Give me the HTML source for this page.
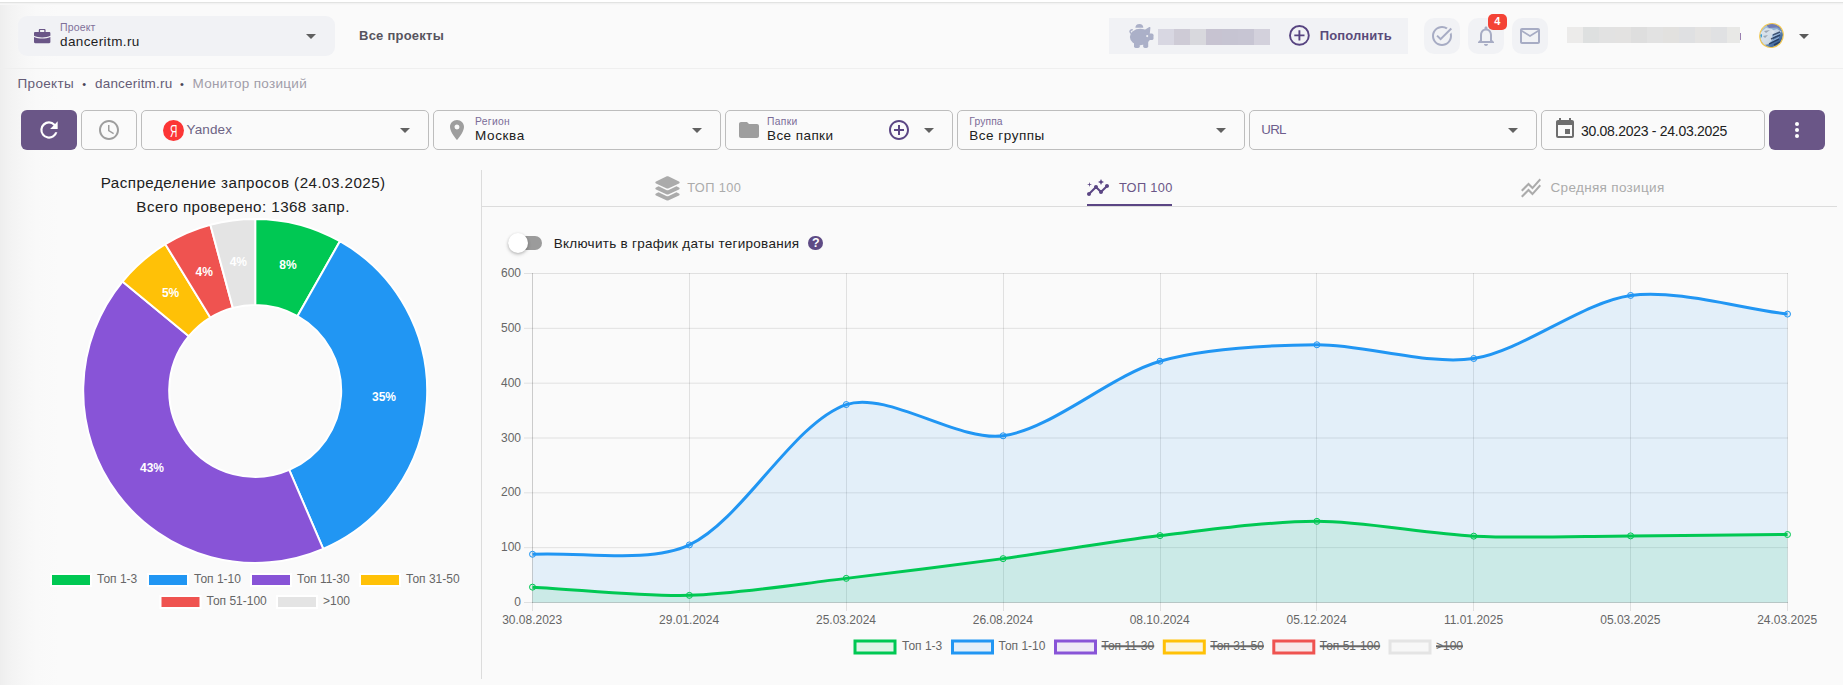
<!DOCTYPE html>
<html lang="ru">
<head>
<meta charset="utf-8">
<title>Монитор позиций</title>
<style>
*{box-sizing:border-box;margin:0;padding:0}
html,body{width:1843px;height:685px;overflow:hidden;background:#fafafa;font-family:"Liberation Sans",sans-serif;color:#212121}
body{position:relative}
.abs{position:absolute}
.topwhite{position:absolute;left:0;top:0;width:1843px;height:2px;background:#fff}
.topline{position:absolute;left:0;top:2px;width:1843px;height:3px;background:linear-gradient(180deg,#e2e3e2 0,#e2e3e2 1px,#f2f2f2 1px,#f2f2f2 2px,#f7f7f7 2px,#f7f7f7 3px)}
.leftshade{position:absolute;left:0;top:3px;width:60px;height:682px;background:linear-gradient(90deg,#eeeeee 0,#f2f2f2 8px,#f5f5f5 17px,#f7f7f7 26px,#f9f9f9 36px,#fafafa 60px)}
.hdrline{position:absolute;left:0;top:68px;width:1843px;height:1px;background:#efefef}
.proj{position:absolute;left:18px;top:16px;width:317px;height:40px;background:#f1f2f5;border-radius:9px}
.t{position:absolute;white-space:nowrap;line-height:1}
.btn{position:absolute;top:110px;height:40px;border-radius:6px}
.sel{position:absolute;top:110px;height:40px;border:1px solid #bdbdbd;border-radius:5px;background:#fafafa}
.ibtn{position:absolute;top:18px;width:36px;height:36px;border-radius:10px;background:#f1f2f5}
svg{position:absolute;overflow:visible}
svg text{font-family:"Liberation Sans",sans-serif}
.c{text-align:center}

</style>
</head>
<body>
<div class="leftshade"></div><div class="topwhite"></div><div class="topline"></div>
<!-- header -->
<div class="proj"></div>
<svg style="left:34px;top:28.800px" width="16.400" height="14.200" viewBox="0 0 16.400 14.200"><path fill="#6a5687" d="M6 0h4.400c.7 0 1.200.5 1.200 1.200V3h3.600c.7 0 1.200.5 1.200 1.200v2.600c-2.400 1.100-5.200 1.700-8.200 1.700S2.400 7.900 0 6.800V4.200C0 3.500.5 3 1.200 3h3.600V1.200C4.800.5 5.300 0 6 0zm.1 1.100V3h4.200V1.100zM0 8.100c2.500 1 5.300 1.500 8.200 1.500s5.700-.5 8.200-1.500V13c0 .7-.5 1.200-1.200 1.200h-14C.5 14.200 0 13.700 0 13z"/></svg>
<span class="t" style="left:60px;top:22.01px;font-size:10.5px;color:#7f7099;font-weight:400;letter-spacing:0.143px;">Проект</span>
<span class="t" style="left:60px;top:34.57px;font-size:13.5px;color:#1d1d1f;font-weight:400;letter-spacing:0.388px;">danceritm.ru</span>
<svg style="left:306px;top:34px" width="10" height="5" viewBox="0 0 10 5"><path fill="#606060" d="M0 0h10L5 5z"/></svg>
<span class="t" style="left:359px;top:29.40px;font-size:13px;color:#57545e;font-weight:700;letter-spacing:0.240px;">Все проекты</span>
<div class="abs" style="left:1109px;top:18px;width:299px;height:36px;background:#f1f2f5"></div>
<svg style="left:1128.800px;top:23.900px" width="24.500" height="24" viewBox="0 0 24.500 24"><g fill="#abb0c8"><path d="M6.400 3.800A3.950 3.800 0 0 1 14.300 3.800z"/><ellipse cx="11.200" cy="13" rx="10.300" ry="8.300"/><path d="M14.600 6.500L20.300 3c.7-.3 1.200 0 1.100.8L20.800 10z"/><rect x="17" y="9.600" width="7.500" height="6.400" rx="1.600"/><rect x="5" y="16" width="5.800" height="8" rx="1.700"/><rect x="14.200" y="16" width="5" height="8" rx="1.700"/></g><path d="M3.300 9.400C.6 9.600 0 6 3.200 5.800" fill="none" stroke="#abb0c8" stroke-width="1.500" stroke-linecap="round"/><circle cx="18.200" cy="12.100" r="1.050" fill="#f0f1f4"/></svg>
<div class="abs" style="left:1158px;top:29px;width:16px;height:16px;background:#d8d7e2"></div>
<div class="abs" style="left:1174px;top:29px;width:16px;height:16px;background:#cecbd6"></div>
<div class="abs" style="left:1190px;top:29px;width:16px;height:16px;background:#d8d8dd"></div>
<div class="abs" style="left:1206px;top:29px;width:16px;height:16px;background:#c7c3d1"></div>
<div class="abs" style="left:1222px;top:29px;width:16px;height:16px;background:#c6c4d2"></div>
<div class="abs" style="left:1238px;top:29px;width:16px;height:16px;background:#c7c5d3"></div>
<div class="abs" style="left:1254px;top:29px;width:16px;height:16px;background:#d3d1dc"></div>
<svg style="left:1289px;top:25.300px" width="21" height="21" viewBox="0 0 21 21"><circle cx="10.400" cy="10.400" r="9.400" fill="none" stroke="#574480" stroke-width="1.900"/><path d="M10.400 5.300v10.200M5.300 10.400h10.200" stroke="#574480" stroke-width="1.900" fill="none"/></svg>
<span class="t" style="left:1319.8px;top:29.20px;font-size:13px;color:#5a4b7a;font-weight:700;letter-spacing:0.098px;">Пополнить</span>
<div class="ibtn" style="left:1424px"></div>
<div class="ibtn" style="left:1468px"></div>
<div class="ibtn" style="left:1512px"></div>
<svg style="left:1430px;top:24px" width="24" height="24" viewBox="0 0 24 24"><path fill="#a7acc4" d="M22 5.180L10.590 16.600l-4.240-4.240 1.410-1.410 2.830 2.830 10-10L22 5.180zm-2.210 5.040c.130.570.210 1.170.210 1.780 0 4.420-3.580 8-8 8s-8-3.580-8-8 3.580-8 8-8c1.580 0 3.040.460 4.280 1.250l1.440-1.440A9.900 9.900 0 0 0 12 2C6.480 2 2 6.480 2 12s4.480 10 10 10 10-4.480 10-10c0-1.190-.220-2.330-.600-3.390l-1.610 1.610z"/></svg>
<svg style="left:1474px;top:24px" width="24" height="24" viewBox="0 0 24 24"><path fill="#a7acc4" d="M12 22c1.100 0 2-.9 2-2h-4c0 1.100.9 2 2 2zm6-6v-5c0-3.070-1.630-5.640-4.500-6.320V4c0-.830-.670-1.500-1.500-1.500s-1.500.670-1.500 1.500v.680C7.640 5.360 6 7.920 6 11v5l-2 2v1h16v-1l-2-2zm-2 1H8v-6c0-2.480 1.510-4.500 4-4.500s4 2.020 4 4.500v6z"/></svg>
<svg style="left:1518px;top:24px" width="24" height="24" viewBox="0 0 24 24"><path fill="#a7acc4" d="M20 4H4c-1.100 0-1.990.9-1.990 2L2 18c0 1.100.9 2 2 2h16c1.100 0 2-.9 2-2V6c0-1.100-.9-2-2-2zm0 14H4V8l8 5 8-5v10zm-8-7L4 6h16l-8 5z"/></svg>
<div class="abs" style="left:1488px;top:14px;width:19px;height:16px;background:#f44336;border-radius:5px"></div>
<span class="t" style="left:1494.3px;top:15.89px;font-size:11px;color:#fff;font-weight:700;">4</span>
<div class="abs" style="left:1567px;top:27px;width:16px;height:16px;background:#ecebea"></div>
<div class="abs" style="left:1583px;top:27px;width:16px;height:16px;background:#dee0e0"></div>
<div class="abs" style="left:1599px;top:27px;width:16px;height:16px;background:#e2e2e2"></div>
<div class="abs" style="left:1615px;top:27px;width:16px;height:16px;background:#e3e2e1"></div>
<div class="abs" style="left:1631px;top:27px;width:16px;height:16px;background:#dedede"></div>
<div class="abs" style="left:1647px;top:27px;width:16px;height:16px;background:#e2e2e2"></div>
<div class="abs" style="left:1663px;top:27px;width:16px;height:16px;background:#e2e1df"></div>
<div class="abs" style="left:1679px;top:27px;width:16px;height:16px;background:#dfe0e2"></div>
<div class="abs" style="left:1695px;top:27px;width:16px;height:16px;background:#e4e3e2"></div>
<div class="abs" style="left:1711px;top:27px;width:16px;height:16px;background:#e0e1e3"></div>
<div class="abs" style="left:1727px;top:27px;width:13px;height:16px;background:#e8e8e6"></div>
<div class="abs" style="left:1740px;top:33px;width:1px;height:7px;background:#9a7fb0"></div>
<svg style="left:1758.500px;top:23.300px" width="25" height="25" viewBox="0 0 25 25"><defs><clipPath id="avc"><ellipse cx="12.500" cy="12.500" rx="11.300" ry="12" transform="rotate(35 12.500 12.500)"/></clipPath><linearGradient id="avg" x1="0" y1="0" x2="1" y2="1"><stop offset="0" stop-color="#b9cfe3"/><stop offset=".45" stop-color="#8fb0d2"/><stop offset=".7" stop-color="#4a72a6"/><stop offset="1" stop-color="#274778"/></linearGradient></defs><g clip-path="url(#avc)"><rect width="25" height="25" fill="url(#avg)"/><path d="M6 1h16l2 6-6-2.500L10 5z" fill="#6d76b0" opacity=".9"/><path d="M2 9l5-4 6 1 3 3-3 3 1 4-4 5-5 1-3-5z" fill="#e6ebef" opacity=".8"/><path d="M12 8l6-2 5 3-4 1-4 3z" fill="#dfe8f0" opacity=".75"/><path d="M5 8l6-1-4 3zM4 13l5-1-3 3z" fill="#8d99a6" opacity=".8"/><path d="M14 12l7-3M12 16l9-4M10 21l10-5M15 22l6-3" stroke="#1f3558" stroke-width="1.400" fill="none" opacity=".8"/><path d="M13 14l8-3.500M11 19l9-4.500" stroke="#a9c6e4" stroke-width="1" fill="none" opacity=".8"/><path d="M1 12l2-1v4z" fill="#35a0d8"/></g><ellipse cx="12.500" cy="12.500" rx="11.600" ry="12.200" transform="rotate(35 12.500 12.500)" fill="none" stroke="#f0c64e" stroke-width="1.100"/></svg>
<svg style="left:1799px;top:34px" width="10" height="5" viewBox="0 0 10 5"><path fill="#5a5a5a" d="M0 0h10L5 5z"/></svg>
<div class="hdrline"></div>
<!-- breadcrumbs -->
<span class="t" style="left:17.5px;top:76.57px;font-size:13.5px;color:#655c76;font-weight:400;letter-spacing:0.338px;">Проекты</span>
<span class="t" style="left:82.2px;top:79.09px;font-size:11px;color:#4a4458;font-weight:400;">•</span>
<span class="t" style="left:95px;top:76.57px;font-size:13.5px;color:#655c76;font-weight:400;letter-spacing:0.197px;">danceritm.ru</span>
<span class="t" style="left:180.1px;top:79.09px;font-size:11px;color:#4a4458;font-weight:400;">•</span>
<span class="t" style="left:192.5px;top:76.57px;font-size:13.5px;color:#a19da9;font-weight:400;letter-spacing:0.306px;">Монитор позиций</span>
<!-- toolbar -->
<div class="btn" style="left:21px;width:56px;background:#6a5687"></div>
<svg style="left:35.800px;top:117px" width="26" height="26" viewBox="0 0 24 24"><path fill="#fff" d="M17.650 6.350A7.958 7.958 0 0 0 12 4a8 8 0 1 0 7.730 10h-2.080A6 6 0 1 1 12 6c1.660 0 3.140.690 4.220 1.780L13 11h7V4z"/></svg>
<div class="sel" style="left:81px;width:56px"></div>
<svg style="left:97px;top:118px" width="24" height="24" viewBox="0 0 24 24"><path fill="#9e9e9e" d="M11.990 2C6.470 2 2 6.480 2 12s4.470 10 9.990 10C17.520 22 22 17.520 22 12S17.520 2 11.990 2zM12 20c-4.420 0-8-3.580-8-8s3.580-8 8-8 8 3.580 8 8-3.580 8-8 8zm.5-13H11v6l5.250 3.150.750-1.230-4.500-2.670z"/></svg>
<div class="sel" style="left:141px;width:288px"></div>
<div class="abs" style="left:163px;top:119.500px;width:21px;height:21px;border-radius:50%;background:#fc3535"></div>
<span class="t" style="left:169.9px;top:123.33px;font-size:16.5px;color:#fff;font-weight:400;transform:scaleX(.62);transform-origin:0 0">Я</span>
<span class="t" style="left:186.5px;top:123.07px;font-size:13.5px;color:#6d6384;font-weight:400;letter-spacing:0.143px;">Yandex</span>
<svg style="left:400px;top:128px" width="10" height="5" viewBox="0 0 10 5"><path fill="#616161" d="M0 0h10L5 5z"/></svg>
<div class="sel" style="left:433px;width:288px"></div>
<svg style="left:444.600px;top:118px" width="24" height="24" viewBox="0 0 24 24"><path fill="#9e9e9e" d="M12 2C8.130 2 5 5.130 5 9c0 5.250 7 13 7 13s7-7.750 7-13c0-3.870-3.130-7-7-7zm0 9.500a2.500 2.500 0 0 1 0-5 2.500 2.500 0 0 1 0 5z"/></svg>
<span class="t" style="left:475px;top:116.98px;font-size:10.3px;color:#7b6c98;font-weight:400;letter-spacing:0.345px;">Регион</span>
<span class="t" style="left:475px;top:128.87px;font-size:13.5px;color:#212121;font-weight:400;letter-spacing:0.622px;">Москва</span>
<svg style="left:692px;top:128px" width="10" height="5" viewBox="0 0 10 5"><path fill="#616161" d="M0 0h10L5 5z"/></svg>
<div class="sel" style="left:725px;width:228px"></div>
<svg style="left:736.600px;top:118px" width="24" height="24" viewBox="0 0 24 24"><path fill="#9e9e9e" d="M10 4H4c-1.100 0-1.990.9-1.990 2L2 18c0 1.100.9 2 2 2h16c1.100 0 2-.9 2-2V8c0-1.100-.9-2-2-2h-8l-2-2z"/></svg>
<span class="t" style="left:767px;top:116.98px;font-size:10.3px;color:#7b6c98;font-weight:400;letter-spacing:0.333px;">Папки</span>
<span class="t" style="left:767px;top:128.87px;font-size:13.5px;color:#212121;font-weight:400;letter-spacing:0.426px;">Все папки</span>
<svg style="left:887px;top:118px" width="24" height="24" viewBox="0 0 24 24"><path fill="#5b4684" d="M13 7h-2v4H7v2h4v4h2v-4h4v-2h-4V7zm-1-5C6.480 2 2 6.480 2 12s4.480 10 10 10 10-4.480 10-10S17.520 2 12 2zm0 18c-4.410 0-8-3.590-8-8s3.590-8 8-8 8 3.590 8 8-3.590 8-8 8z"/></svg>
<svg style="left:923.5px;top:128px" width="10" height="5" viewBox="0 0 10 5"><path fill="#616161" d="M0 0h10L5 5z"/></svg>
<div class="sel" style="left:957px;width:288px"></div>
<span class="t" style="left:969.3px;top:116.98px;font-size:10.3px;color:#7b6c98;font-weight:400;letter-spacing:0.131px;">Группа</span>
<span class="t" style="left:969.3px;top:128.87px;font-size:13.5px;color:#212121;font-weight:400;letter-spacing:0.515px;">Все группы</span>
<svg style="left:1216px;top:128px" width="10" height="5" viewBox="0 0 10 5"><path fill="#616161" d="M0 0h10L5 5z"/></svg>
<div class="sel" style="left:1249px;width:288px"></div>
<span class="t" style="left:1261.2px;top:123.24px;font-size:13.3px;color:#6d5d8c;font-weight:400;letter-spacing:-0.653px;">URL</span>
<svg style="left:1508px;top:128px" width="10" height="5" viewBox="0 0 10 5"><path fill="#616161" d="M0 0h10L5 5z"/></svg>
<div class="sel" style="left:1541px;width:224px"></div>
<svg style="left:1552.800px;top:117.100px" width="24" height="24" viewBox="0 0 24 24"><path fill="#6e6e6e" d="M17 12h-5v5h5v-5zM16 1v2H8V1H6v2H5c-1.110 0-1.990.9-1.990 2L3 19a2 2 0 0 0 2 2h14c1.100 0 2-.9 2-2V5c0-1.100-.9-2-2-2h-1V1h-2zm3 18H5V8h14v11z"/></svg>
<span class="t" style="left:1581px;top:124.15px;font-size:14px;color:#212121;font-weight:400;letter-spacing:-0.285px;">30.08.2023 - 24.03.2025</span>
<div class="btn" style="left:1769px;width:56px;background:#6a5687"></div>
<svg style="left:1785px;top:118.400px" width="24" height="24" viewBox="0 0 24 24"><circle cx="12" cy="6" r="2" fill="#fff"/><circle cx="12" cy="12" r="2" fill="#fff"/><circle cx="12" cy="18" r="2" fill="#fff"/></svg>
<!-- left panel: donut -->
<span class="t c" style="left:43.19999999999999px;width:400px;top:175.13px;font-size:15.2px;color:#212121;font-weight:400;letter-spacing:0.445px;">Распределение запросов (24.03.2025)</span>
<span class="t c" style="left:43.099999999999994px;width:400px;top:199.43px;font-size:15.2px;color:#212121;font-weight:400;letter-spacing:0.425px;">Всего проверено: 1368 запр.</span>
<svg style="left:0;top:0" width="481" height="685" viewBox="0 0 481 685"><path d="M255.20 218.90A172 172 0 0 1 339.90 241.20L297.55 316.05A86 86 0 0 0 255.20 304.90Z" fill="#00c853" stroke="#fff" stroke-width="2" stroke-linejoin="bevel"/><path d="M339.90 241.20A172 172 0 0 1 323.23 548.87L289.22 469.89A86 86 0 0 0 297.55 316.05Z" fill="#2196f3" stroke="#fff" stroke-width="2" stroke-linejoin="bevel"/><path d="M323.23 548.87A172 172 0 0 1 122.48 281.49L188.84 336.20A86 86 0 0 0 289.22 469.89Z" fill="#8854d7" stroke="#fff" stroke-width="2" stroke-linejoin="bevel"/><path d="M122.48 281.49A172 172 0 0 1 165.33 244.25L210.27 317.57A86 86 0 0 0 188.84 336.20Z" fill="#ffc107" stroke="#fff" stroke-width="2" stroke-linejoin="bevel"/><path d="M165.33 244.25A172 172 0 0 1 210.39 224.84L232.80 307.87A86 86 0 0 0 210.27 317.57Z" fill="#ef5350" stroke="#fff" stroke-width="2" stroke-linejoin="bevel"/><path d="M210.39 224.84A172 172 0 0 1 255.20 218.90L255.20 304.90A86 86 0 0 0 232.80 307.87Z" fill="#e4e4e4" stroke="#fff" stroke-width="2" stroke-linejoin="bevel"/><text x="288.0" y="269.4" font-size="12" font-weight="700" fill="#fff" text-anchor="middle">8%</text><text x="384.0" y="401.1" font-size="12" font-weight="700" fill="#fff" text-anchor="middle">35%</text><text x="152.0" y="471.6" font-size="12" font-weight="700" fill="#fff" text-anchor="middle">43%</text><text x="170.6" y="296.7" font-size="12" font-weight="700" fill="#fff" text-anchor="middle">5%</text><text x="204.2" y="275.6" font-size="12" font-weight="700" fill="#fff" text-anchor="middle">4%</text><text x="238.3" y="266.2" font-size="12" font-weight="700" fill="#fff" text-anchor="middle">4%</text><rect x="51" y="574" width="40" height="12" fill="#00c853" stroke="#fff" stroke-width="2"/><text x="97" y="583.4" font-size="12" fill="#666">Топ 1-3</text><rect x="148" y="574" width="40" height="12" fill="#2196f3" stroke="#fff" stroke-width="2"/><text x="194" y="583.4" font-size="12" fill="#666">Топ 1-10</text><rect x="251" y="574" width="40" height="12" fill="#8854d7" stroke="#fff" stroke-width="2"/><text x="297" y="583.4" font-size="12" fill="#666">Топ 11-30</text><rect x="360" y="574" width="40" height="12" fill="#ffc107" stroke="#fff" stroke-width="2"/><text x="406" y="583.4" font-size="12" fill="#666">Топ 31-50</text><rect x="160.5" y="596" width="40" height="12" fill="#ef5350" stroke="#fff" stroke-width="2"/><text x="206.5" y="605.4" font-size="12" fill="#666">Топ 51-100</text><rect x="277" y="596" width="40" height="12" fill="#e4e4e4" stroke="#fff" stroke-width="2"/><text x="323" y="605.4" font-size="12" fill="#666">&gt;100</text></svg>
<div class="abs" style="left:481px;top:170px;width:1px;height:509px;background:#dcdcdc"></div>
<!-- right panel: line chart -->
<div class="abs" style="left:482px;top:206px;width:1355px;height:1px;background:#dcdcdc"></div>
<svg style="left:654.500px;top:175.500px" width="25" height="25" viewBox="0 0 25 25"><path fill="#ababab" d="M12.500 .3c.4 0 .8.100 1.200.3l10.300 4.900c.9.400.9 1.500 0 1.900l-10.300 4.900c-.8.400-1.600.4-2.400 0L1 7.400c-.9-.4-.9-1.500 0-1.900L11.300.6c.4-.2.800-.3 1.200-.3zM3.500 10.300l7.800 3.700c.8.400 1.600.4 2.400 0l7.800-3.700 2.500 1.200c.9.400.9 1.500 0 1.900l-10.300 4.900c-.8.400-1.600.4-2.400 0L1 13.400c-.9-.4-.9-1.500 0-1.900zM3.500 16.300l7.800 3.700c.8.400 1.600.4 2.400 0l7.800-3.700 2.500 1.200c.9.400.9 1.500 0 1.900l-10.300 4.900c-.8.400-1.600.4-2.400 0L1 19.400c-.9-.4-.9-1.500 0-1.900z"/></svg>
<span class="t" style="left:687.2px;top:181.86px;font-size:12.8px;color:#ababab;font-weight:400;letter-spacing:0.381px;">ТОП 100</span>
<svg style="left:1086px;top:176px" width="24" height="24" viewBox="0 0 24 24"><path fill="#5b4684" d="M21 8c-1.450 0-2.260 1.440-1.930 2.510l-3.550 3.560c-.3-.090-.740-.090-1.040 0l-2.550-2.550C12.270 10.450 11.460 9 10 9c-1.450 0-2.270 1.440-1.930 2.520l-4.560 4.550C2.440 15.740 1 16.550 1 18c0 1.100.9 2 2 2 1.450 0 2.260-1.440 1.930-2.510l4.550-4.560c.3.090.740.090 1.040 0l2.550 2.550C12.730 16.550 13.540 18 15 18c1.450 0 2.270-1.440 1.930-2.520l3.560-3.550c1.070.330 2.510-.480 2.510-1.930 0-1.100-.9-2-2-2zM15 9l.940-2.070L18 6l-2.060-.930L15 3l-.920 2.070L12 6l2.080.930zM3.500 11L4 9l2-.5L4 8l-.5-2L3 8l-2 .5L3 9z"/></svg>
<span class="t" style="left:1119px;top:181.86px;font-size:12.8px;color:#6a5687;font-weight:400;letter-spacing:0.348px;">ТОП 100</span>
<div class="abs" style="left:1087px;top:204px;width:85px;height:2px;background:#5b4684"></div>
<svg style="left:1518.500px;top:176px" width="24" height="24" viewBox="0 0 24 24"><path fill="#ababab" d="M2 19.990l7.500-7.510 4 4 7.090-7.970L22 9.920l-8.500 9.560-4-4-6 6.010-1.500-1.500zm1.500-4.500l6-6.010 4 4L22 3.920l-1.410-1.410-7.090 7.970-4-4L2 13.990l1.500 1.500z"/></svg>
<span class="t" style="left:1550.5px;top:181.17px;font-size:13.5px;color:#ababab;font-weight:400;letter-spacing:0.325px;">Средняя позиция</span>
<div class="abs" style="left:508px;top:236px;width:34px;height:14px;border-radius:7px;background:#9b9b9b"></div>
<div class="abs" style="left:508px;top:233px;width:20px;height:20px;border-radius:50%;background:#fff;box-shadow:0 1px 3px 0 rgba(0,0,0,.22),0 2px 4px 0 rgba(0,0,0,.1)"></div>
<span class="t" style="left:553.7px;top:236.57px;font-size:13.5px;color:#212121;font-weight:400;letter-spacing:0.283px;">Включить в график даты тегирования</span>
<div class="abs" style="left:808.300px;top:235.600px;width:14.500px;height:14.500px;border-radius:50%;background:#5e4b85"></div>
<span class="t" style="left:812.1px;top:236.72px;font-size:12.5px;color:#fff;font-weight:700;">?</span>
<svg style="left:482px;top:260px" width="1361" height="425" viewBox="482 260 1361 425"><path d="M524 602.50H532" stroke="rgba(0,0,0,.1)" stroke-width="1" fill="none"/><path d="M532 602.50H1788" stroke="rgba(0,0,0,.19)" stroke-width="1" fill="none"/><text x="521" y="606.1" font-size="12" fill="#666" text-anchor="end">0</text><path d="M524 547.67H532" stroke="rgba(0,0,0,.1)" stroke-width="1" fill="none"/><path d="M532 547.67H1788" stroke="rgba(0,0,0,.1)" stroke-width="1" fill="none"/><text x="521" y="551.3" font-size="12" fill="#666" text-anchor="end">100</text><path d="M524 492.83H532" stroke="rgba(0,0,0,.1)" stroke-width="1" fill="none"/><path d="M532 492.83H1788" stroke="rgba(0,0,0,.1)" stroke-width="1" fill="none"/><text x="521" y="496.4" font-size="12" fill="#666" text-anchor="end">200</text><path d="M524 438.00H532" stroke="rgba(0,0,0,.1)" stroke-width="1" fill="none"/><path d="M532 438.00H1788" stroke="rgba(0,0,0,.1)" stroke-width="1" fill="none"/><text x="521" y="441.6" font-size="12" fill="#666" text-anchor="end">300</text><path d="M524 383.17H532" stroke="rgba(0,0,0,.1)" stroke-width="1" fill="none"/><path d="M532 383.17H1788" stroke="rgba(0,0,0,.1)" stroke-width="1" fill="none"/><text x="521" y="386.8" font-size="12" fill="#666" text-anchor="end">400</text><path d="M524 328.34H532" stroke="rgba(0,0,0,.1)" stroke-width="1" fill="none"/><path d="M532 328.34H1788" stroke="rgba(0,0,0,.1)" stroke-width="1" fill="none"/><text x="521" y="331.9" font-size="12" fill="#666" text-anchor="end">500</text><path d="M524 273.50H532" stroke="rgba(0,0,0,.1)" stroke-width="1" fill="none"/><path d="M532 273.50H1788" stroke="rgba(0,0,0,.1)" stroke-width="1" fill="none"/><text x="521" y="277.1" font-size="12" fill="#666" text-anchor="end">600</text><path d="M532.5 603V611" stroke="rgba(0,0,0,.1)" stroke-width="1" fill="none"/><path d="M532.5 273V603" stroke="rgba(0,0,0,.19)" stroke-width="1" fill="none"/><text x="532.2" y="623.700" font-size="12" fill="#666" text-anchor="middle">30.08.2023</text><path d="M689.5 603V611" stroke="rgba(0,0,0,.1)" stroke-width="1" fill="none"/><path d="M689.5 273V603" stroke="rgba(0,0,0,.1)" stroke-width="1" fill="none"/><text x="689.1" y="623.700" font-size="12" fill="#666" text-anchor="middle">29.01.2024</text><path d="M846.5 603V611" stroke="rgba(0,0,0,.1)" stroke-width="1" fill="none"/><path d="M846.5 273V603" stroke="rgba(0,0,0,.1)" stroke-width="1" fill="none"/><text x="846.0" y="623.700" font-size="12" fill="#666" text-anchor="middle">25.03.2024</text><path d="M1003.5 603V611" stroke="rgba(0,0,0,.1)" stroke-width="1" fill="none"/><path d="M1003.5 273V603" stroke="rgba(0,0,0,.1)" stroke-width="1" fill="none"/><text x="1002.8" y="623.700" font-size="12" fill="#666" text-anchor="middle">26.08.2024</text><path d="M1160.5 603V611" stroke="rgba(0,0,0,.1)" stroke-width="1" fill="none"/><path d="M1160.5 273V603" stroke="rgba(0,0,0,.1)" stroke-width="1" fill="none"/><text x="1159.7" y="623.700" font-size="12" fill="#666" text-anchor="middle">08.10.2024</text><path d="M1316.5 603V611" stroke="rgba(0,0,0,.1)" stroke-width="1" fill="none"/><path d="M1316.5 273V603" stroke="rgba(0,0,0,.1)" stroke-width="1" fill="none"/><text x="1316.6" y="623.700" font-size="12" fill="#666" text-anchor="middle">05.12.2024</text><path d="M1473.5 603V611" stroke="rgba(0,0,0,.1)" stroke-width="1" fill="none"/><path d="M1473.5 273V603" stroke="rgba(0,0,0,.1)" stroke-width="1" fill="none"/><text x="1473.5" y="623.700" font-size="12" fill="#666" text-anchor="middle">11.01.2025</text><path d="M1630.5 603V611" stroke="rgba(0,0,0,.1)" stroke-width="1" fill="none"/><path d="M1630.5 273V603" stroke="rgba(0,0,0,.1)" stroke-width="1" fill="none"/><text x="1630.3" y="623.700" font-size="12" fill="#666" text-anchor="middle">05.03.2025</text><path d="M1787.5 603V611" stroke="rgba(0,0,0,.1)" stroke-width="1" fill="none"/><path d="M1787.5 273V603" stroke="rgba(0,0,0,.1)" stroke-width="1" fill="none"/><text x="1787.2" y="623.700" font-size="12" fill="#666" text-anchor="middle">24.03.2025</text><path d="M532.50 554.25C579.56 551.45 649.14 564.12 689.38 544.93C743.27 519.21 792.77 423.15 846.25 404.55C886.89 390.42 958.00 442.04 1003.12 435.81C1052.13 429.04 1110.67 375.55 1160.00 361.23C1204.80 348.24 1269.77 345.20 1316.88 344.78C1363.90 344.37 1428.36 365.63 1473.75 358.49C1522.48 350.83 1581.97 302.32 1630.62 295.44C1676.09 289.00 1740.44 308.49 1787.50 314.08L1787.50 602.5L532.50 602.5Z" fill="rgba(33,150,243,.1)" stroke="none"/><path d="M532.50 554.25C579.56 551.45 649.14 564.12 689.38 544.93C743.27 519.21 792.77 423.15 846.25 404.55C886.89 390.42 958.00 442.04 1003.12 435.81C1052.13 429.04 1110.67 375.55 1160.00 361.23C1204.80 348.24 1269.77 345.20 1316.88 344.78C1363.90 344.37 1428.36 365.63 1473.75 358.49C1522.48 350.83 1581.97 302.32 1630.62 295.44C1676.09 289.00 1740.44 308.49 1787.50 314.08" fill="none" stroke="#2196f3" stroke-width="3" stroke-linecap="butt" stroke-linejoin="miter"/><circle cx="532.50" cy="554.25" r="3" fill="rgba(33,150,243,.1)" stroke="#2196f3" stroke-width="1"/><circle cx="689.38" cy="544.93" r="3" fill="rgba(33,150,243,.1)" stroke="#2196f3" stroke-width="1"/><circle cx="846.25" cy="404.55" r="3" fill="rgba(33,150,243,.1)" stroke="#2196f3" stroke-width="1"/><circle cx="1003.12" cy="435.81" r="3" fill="rgba(33,150,243,.1)" stroke="#2196f3" stroke-width="1"/><circle cx="1160.00" cy="361.23" r="3" fill="rgba(33,150,243,.1)" stroke="#2196f3" stroke-width="1"/><circle cx="1316.88" cy="344.78" r="3" fill="rgba(33,150,243,.1)" stroke="#2196f3" stroke-width="1"/><circle cx="1473.75" cy="358.49" r="3" fill="rgba(33,150,243,.1)" stroke="#2196f3" stroke-width="1"/><circle cx="1630.62" cy="295.44" r="3" fill="rgba(33,150,243,.1)" stroke="#2196f3" stroke-width="1"/><circle cx="1787.50" cy="314.08" r="3" fill="rgba(33,150,243,.1)" stroke="#2196f3" stroke-width="1"/><path d="M532.50 587.15C579.56 589.61 642.42 596.68 689.38 595.37C736.54 594.05 799.23 583.88 846.25 578.37C893.36 572.86 956.13 565.04 1003.12 558.63C1050.25 552.21 1112.78 541.22 1160.00 535.60C1206.91 530.03 1269.82 521.26 1316.88 521.35C1363.95 521.43 1426.58 533.97 1473.75 536.15C1520.71 538.33 1583.56 536.12 1630.62 535.88C1677.69 535.63 1740.44 534.92 1787.50 534.51L1787.50 602.5L532.50 602.5Z" fill="rgba(0,200,83,.1)" stroke="none"/><path d="M532.50 587.15C579.56 589.61 642.42 596.68 689.38 595.37C736.54 594.05 799.23 583.88 846.25 578.37C893.36 572.86 956.13 565.04 1003.12 558.63C1050.25 552.21 1112.78 541.22 1160.00 535.60C1206.91 530.03 1269.82 521.26 1316.88 521.35C1363.95 521.43 1426.58 533.97 1473.75 536.15C1520.71 538.33 1583.56 536.12 1630.62 535.88C1677.69 535.63 1740.44 534.92 1787.50 534.51" fill="none" stroke="#00c853" stroke-width="3" stroke-linecap="butt" stroke-linejoin="miter"/><circle cx="532.50" cy="587.15" r="3" fill="rgba(0,200,83,.1)" stroke="#00c853" stroke-width="1"/><circle cx="689.38" cy="595.37" r="3" fill="rgba(0,200,83,.1)" stroke="#00c853" stroke-width="1"/><circle cx="846.25" cy="578.37" r="3" fill="rgba(0,200,83,.1)" stroke="#00c853" stroke-width="1"/><circle cx="1003.12" cy="558.63" r="3" fill="rgba(0,200,83,.1)" stroke="#00c853" stroke-width="1"/><circle cx="1160.00" cy="535.60" r="3" fill="rgba(0,200,83,.1)" stroke="#00c853" stroke-width="1"/><circle cx="1316.88" cy="521.35" r="3" fill="rgba(0,200,83,.1)" stroke="#00c853" stroke-width="1"/><circle cx="1473.75" cy="536.15" r="3" fill="rgba(0,200,83,.1)" stroke="#00c853" stroke-width="1"/><circle cx="1630.62" cy="535.88" r="3" fill="rgba(0,200,83,.1)" stroke="#00c853" stroke-width="1"/><circle cx="1787.50" cy="534.51" r="3" fill="rgba(0,200,83,.1)" stroke="#00c853" stroke-width="1"/><rect x="855" y="641" width="40" height="12" fill="rgba(0,200,83,.1)" stroke="#00c853" stroke-width="3"/><text x="902" y="650.400" font-size="12" fill="#666">Топ 1-3</text><rect x="952.5" y="641" width="40" height="12" fill="rgba(33,150,243,.1)" stroke="#2196f3" stroke-width="3"/><text x="998.5" y="650.400" font-size="12" fill="#666">Топ 1-10</text><rect x="1055.5" y="641" width="40" height="12" fill="rgba(136,84,215,.1)" stroke="#8854d7" stroke-width="3"/><text x="1101.5" y="650.400" font-size="12" fill="#666">Топ 11-30</text><path d="M1101.5 646.300H1154.2" stroke="#666" stroke-width="2"/><rect x="1164.3" y="641" width="40" height="12" fill="rgba(255,193,7,.1)" stroke="#ffc107" stroke-width="3"/><text x="1210.3" y="650.400" font-size="12" fill="#666">Топ 31-50</text><path d="M1210.3 646.300H1263.9" stroke="#666" stroke-width="2"/><rect x="1273.8" y="641" width="40" height="12" fill="rgba(239,83,80,.1)" stroke="#ef5350" stroke-width="3"/><text x="1319.8" y="650.400" font-size="12" fill="#666">Топ 51-100</text><path d="M1319.8 646.300H1380.1" stroke="#666" stroke-width="2"/><rect x="1390" y="641" width="40" height="12" fill="rgba(228,228,228,.1)" stroke="#e4e4e4" stroke-width="3"/><text x="1436" y="650.400" font-size="12" fill="#666">&gt;100</text><path d="M1436 646.300H1463.0" stroke="#666" stroke-width="2"/></svg>
</body>
</html>
